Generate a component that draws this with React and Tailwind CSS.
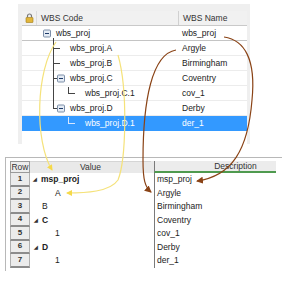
import React from "react";

const treeRows = [
  { code: "wbs_proj", name: "wbs_proj", pad: "pl-[34px]", first: true },
  { code: "wbs_proj.A", name: "Argyle", pad: "pl-[48px]" },
  { code: "wbs_proj.B", name: "Birmingham", pad: "pl-[48px]" },
  { code: "wbs_proj.C", name: "Coventry", pad: "pl-[48px]" },
  { code: "wbs_proj.C.1", name: "cov_1", pad: "pl-[63px]" },
  { code: "wbs_proj.D", name: "Derby", pad: "pl-[48px]" },
  { code: "wbs_proj.D.1", name: "der_1", pad: "pl-[63px]", selected: true },
];

const gridRows = [
  { n: 1, value: "msp_proj", desc: "msp_proj", group: true, pad: "pl-[3px]" },
  { n: 2, value: "A", desc: "Argyle", pad: "pl-[25px]" },
  { n: 3, value: "B", desc: "Birmingham", pad: "pl-[12px]" },
  { n: 4, value: "C", desc: "Coventry", group: true, pad: "pl-[4px]" },
  { n: 5, value: "1", desc: "cov_1", pad: "pl-[25px]" },
  { n: 6, value: "D", desc: "Derby", group: true, pad: "pl-[4px]" },
  { n: 7, value: "1", desc: "der_1", pad: "pl-[25px]" },
];

function Expander({ x, y }) {
  return (
    <g>
      <rect x={x + 0.5} y={y + 0.5} width="7" height="7" rx="1" fill="#e4ebf4" stroke="#7d8fa8" />
      <line x1={x + 2} y1={y + 4} x2={x + 6} y2={y + 4} stroke="#1d3b6a" strokeWidth="1" />
    </g>
  );
}

function Overlay() {
  return (
    <svg className="absolute left-0 top-0 pointer-events-none" width="284" height="282" viewBox="0 0 284 282">
      <defs>
        <marker id="ya" markerWidth="6" markerHeight="6" refX="5" refY="3" orient="auto" markerUnits="userSpaceOnUse">
          <path d="M0 0 L6 3 L0 6 Z" fill="#f5d94a" />
        </marker>
        <marker id="ba" markerWidth="7" markerHeight="7" refX="6" refY="3.5" orient="auto" markerUnits="userSpaceOnUse">
          <path d="M0 0 L7 3.5 L0 7 Z" fill="#8a4316" />
        </marker>
      </defs>

      {/* tree connectors */}
      <g stroke="#444" strokeWidth="1" shapeRendering="crispEdges">
        <line x1="53.5" y1="38" x2="53.5" y2="108.5" />
        <line x1="53.5" y1="48.5" x2="60" y2="48.5" />
        <line x1="53.5" y1="63.5" x2="60" y2="63.5" />
        <line x1="53.5" y1="78.5" x2="57" y2="78.5" />
        <line x1="53.5" y1="108.5" x2="57" y2="108.5" />
        <line x1="68.5" y1="87" x2="68.5" y2="93.5" />
        <line x1="68.5" y1="93.5" x2="75" y2="93.5" />
      </g>
      <g stroke="#d6e6ff" strokeWidth="1" shapeRendering="crispEdges">
        <line x1="68.5" y1="117" x2="68.5" y2="123.5" />
        <line x1="68.5" y1="123.5" x2="75" y2="123.5" />
      </g>
      <Expander x={43} y={29.5} />
      <Expander x={57} y={74.5} />
      <Expander x={57} y={104.5} />

      {/* yellow arrows */}
      <path d="M56 42 C 36 70, 34 140, 52 170" fill="none" stroke="#f5e27a" strokeWidth="1.2" markerEnd="url(#ya)" />
      <path d="M118 55 C 128 90, 126 160, 118 180 C 110 192, 85 193, 67 193" fill="none" stroke="#f5e27a" strokeWidth="1.2" markerEnd="url(#ya)" />

      {/* brown arrows */}
      <path d="M176 50 C 152 54, 143 100, 143 160 C 143 180, 145 187, 151 192" fill="none" stroke="#8a4316" strokeWidth="1.2" markerEnd="url(#ba)" />
      <path d="M224 37 C 245 40, 256 60, 252 100 C 248 150, 232 176, 197 181" fill="none" stroke="#8a4316" strokeWidth="1.2" markerEnd="url(#ba)" />
    </svg>
  );
}

export default function App() {
  return (
    <div
      className="relative w-[284px] h-[282px] overflow-hidden bg-white pt-[4px] text-[#222]"
      style={{ fontFamily: '"Liberation Sans", Arial, sans-serif' }}
    >
      {/* WBS tree panel */}
      <div className="ml-[18px] w-[232px] h-[140px] bg-[#efefef] pt-[7px] pl-[4px] pr-[3px]">
        <div className="h-full bg-white flex flex-col">
          <div className="h-[15px] flex bg-[#f1f1f1] border-b border-[#c9c9c9] text-[8.5px] text-[#333]">
            <div className="w-[14px] flex items-center justify-center">
              <svg width="9" height="10" viewBox="0 0 9 10">
                <path d="M2.5 4.5 V3 a2 2 0 0 1 4 0 V4.5" fill="none" stroke="#777" strokeWidth="1.2" />
                <rect x="1" y="4.5" width="7" height="5" rx="0.5" fill="#e2b63a" stroke="#a07a1a" strokeWidth="0.6" />
              </svg>
            </div>
            <div className="w-[142px] flex items-center pl-[4px] border-l border-[#dcdcdc]">WBS Code</div>
            <div className="flex-1 flex items-center pl-[4px] border-l border-[#d0d0d0]">WBS Name</div>
          </div>
          {treeRows.map((r) => (
            <div
              key={r.code}
              className={`h-[15px] flex items-center text-[8.5px] border-b ${
                r.selected
                  ? "bg-[#3399ff] text-white border-[#3399ff]"
                  : r.first
                  ? "border-[#c4c4c4]"
                  : "border-[#ececec]"
              }`}
            >
              <div className={`w-[156px] ${r.pad}`}>{r.code}</div>
              <div className="flex-1 pl-[4px]">{r.name}</div>
            </div>
          ))}
        </div>
      </div>

      {/* Grid panel */}
      <div className="ml-[5px] mt-[13px] w-[277px] h-[114px] border-t border-l border-[#b8b8b8] pl-[4px] pt-[3px] text-[8.5px]">
        <div className="flex h-[12px]">
          <div className="w-[20px] flex items-center justify-center bg-[#ededed] border border-[#9a9a9a] text-[#333]">Row</div>
          <div className="w-[121px] flex items-center justify-center bg-[#e9e9e9] border-t border-[#d5d5d5] text-[#333]">Value</div>
          <div className="w-[3px] bg-[#e9e9e9]" />
          <div className="w-[122px] flex items-center justify-center bg-[#ececec] border-l border-[#7a7a7a] border-b-2 border-b-[#4f9a4f] text-[#333] pl-[40px]">Description</div>
        </div>
        {gridRows.map((r) => (
          <div key={r.n} className="flex h-[13.5px]">
            <div className="w-[20px] flex items-center justify-center bg-[#ececec] border-x border-b-2 border-x-[#b0b0b0] border-b-[#8c8c8c] text-[8px] font-bold text-[#333]">
              {r.n}
            </div>
            <div className={`w-[124px] flex items-center ${r.pad} ${r.group ? "font-bold" : ""}`}>
              {r.group && <span className="text-[5px] mr-[4px] text-[#333]">◢</span>}
              {r.value}
            </div>
            <div className="w-[122px] flex items-center pl-[2px] border-l border-[#7a7a7a]">{r.desc}</div>
          </div>
        ))}
      </div>

      <Overlay />
    </div>
  );
}
